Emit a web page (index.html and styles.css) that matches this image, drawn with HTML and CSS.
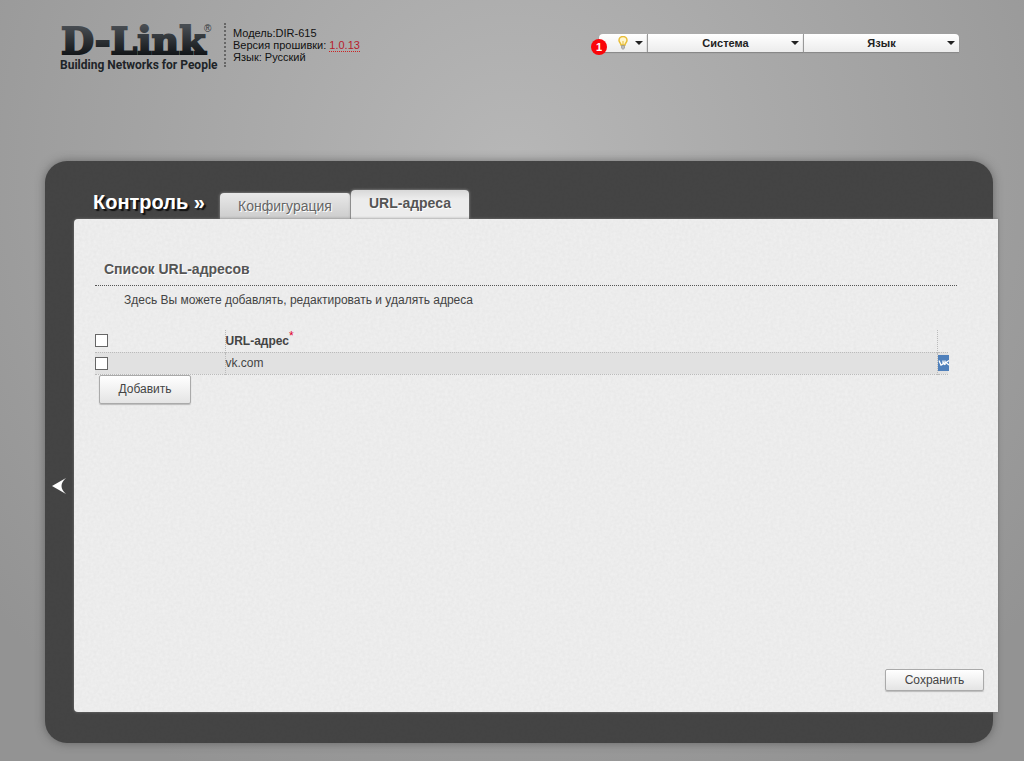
FILE: index.html
```html
<!DOCTYPE html>
<html lang="ru">
<head>
<meta charset="utf-8">
<title>D-Link DIR-615</title>
<link rel="stylesheet" href="styles.css">
</head>
<body>
<header class="header">
  <div class="brand">
    <svg class="brand-logo" viewBox="0 0 152 36">
      <defs>
        <linearGradient id="ink" gradientUnits="userSpaceOnUse" x1="0" y1="4" x2="0" y2="33">
          <stop offset="0" stop-color="#484d52"/>
          <stop offset="1" stop-color="#121518"/>
        </linearGradient>
      </defs>
      <text class="brand-name" x="1" y="32" fill="url(#ink)" stroke="url(#ink)">D-Link</text>
      <text class="brand-mark" x="144" y="10">®</text>
    </svg>
    <div class="brand-tagline">Building Networks for People</div>
  </div>
  <div class="device">
    <div>Модель:DIR-615</div>
    <div>Версия прошивки: <a class="version" href="#">1.0.13</a></div>
    <div>Язык: Русский</div>
  </div>
  <nav class="menu" aria-label="Главное меню">
    <button class="menu-item menu-item-notice" type="button" aria-label="Уведомления">
      <svg class="bulb" viewBox="0 0 12 14" aria-hidden="true">
        <path d="M4 9 C4 7 2 6.500 2 4.300 A4 3.800 0 0 1 10 4.300 C10 6.500 8 7 8 9 Z" fill="#fff6cf" stroke="#e8bd38" stroke-width="1.500"/>
        <path d="M6 5 V9" stroke="#e8bd38"/>
        <path d="M4.500 9.500 H7.500 V12 L6 13.500 L4.500 12 Z" fill="#bbb" stroke="#888" stroke-width=".6"/>
      </svg>
      <span class="caret"></span>
      <span class="badge">1</span>
    </button>
    <button class="menu-item" type="button"><span class="menu-label">Система</span><span class="caret"></span></button>
    <button class="menu-item" type="button"><span class="menu-label">Язык</span><span class="caret"></span></button>
  </nav>
</header>
<main class="panel">
  <div class="panel-head">
    <h1 class="section">Контроль »</h1>
    <nav class="tabs">
      <a class="tab" href="#">Конфигурация</a>
      <a class="tab tab-active" href="#" aria-current="page">URL-адреса</a>
    </nav>
  </div>
  <div class="panel-body">
    <button class="collapse" type="button" aria-label="Свернуть меню">
      <svg class="collapse-icon" viewBox="0 0 14 16" aria-hidden="true"><path d="M0 8 L14 0 Q5 8 14 16 Z" fill="#fff"/></svg>
    </button>
    <section class="content">
      <h2 class="title">Список URL-адресов</h2>
      <p class="hint">Здесь Вы можете добавлять, редактировать и удалять адреса</p>
      <table class="urls">
        <thead>
          <tr>
            <th class="col-check"><input class="check" type="checkbox" aria-label="Выбрать все"></th>
            <th class="col-url">URL-адрес<sup class="required">*</sup></th>
            <th class="col-icon"></th>
          </tr>
        </thead>
        <tbody>
          <tr>
            <td class="col-check"><input class="check" type="checkbox" aria-label="Выбрать vk.com"></td>
            <td class="col-url">vk.com</td>
            <td class="col-icon">
              <svg class="site-icon" viewBox="0 0 11 16" role="img" aria-label="VK"><path d="M0 0H11V16H0Z" fill="#4f80bb"/><path d="M1 5.500 L3 10 L5 9 V5.500 M5 7 L7 10 M7 5.500 V10 M11 5.500 L8 7.500 L11 10" fill="none" stroke="#fff" stroke-width="1.300"/></svg>
            </td>
          </tr>
        </tbody>
      </table>
      <button class="button button-add" type="button">Добавить</button>
      <button class="button button-save" type="button">Сохранить</button>
    </section>
  </div>
</main>
</body>
</html>
```
FILE: styles.css
```css
* {
  box-sizing: border-box;
}

:root {
  --grain: url("data:image/svg+xml,%3Csvg xmlns='http://www.w3.org/2000/svg' width='200' height='200'%3E%3Cfilter id='n'%3E%3CfeTurbulence type='fractalNoise' baseFrequency='.35' numOctaves='2' stitchTiles='stitch'/%3E%3CfeColorMatrix values='0 0 0 0 0 0 0 0 0 0 0 0 0 0 0 0 0 0 .04 0'/%3E%3C/filter%3E%3Crect width='200' height='200' filter='url(%23n)'/%3E%3C/svg%3E");
}

body {
  display: flex;
  flex-direction: column;
  min-height: 100vh;
  margin: 0;
  padding: 0 31px 18px 45px;
  background: radial-gradient(circle 680px at 50% 170px, #b7b7b7, #939393);
  color: #444;
  font: 12px/16px "Liberation Sans", Arial, sans-serif;
}

button {
  font-family: inherit;
  cursor: pointer;
}

.header {
  display: flex;
  align-items: flex-start;
  height: 161px;
  padding: 22px 34px 0 15px;
}

.brand {
  width: 152px;
  color: #202428;
}

.brand-logo {
  display: block;
  width: 152px;
  height: 36px;
  overflow: visible;
}

.brand-name {
  font: bold 38px "DejaVu Serif", serif;
  stroke-width: 2px;
}

.brand-mark {
  fill: #33373b;
  font: 10px "Liberation Sans", sans-serif;
}

.brand-tagline {
  font: bold 12px/14px "Liberation Sans Narrow", Roboto, sans-serif;
  white-space: nowrap;
}

.device {
  margin: 1px 0 0 12px;
  padding: 4px 0 4px 7px;
  border-left: 2px dotted #666;
  color: #111;
  font-size: 11px;
  line-height: 12px;
  white-space: nowrap;
}

.version {
  border-bottom: 1px dotted #c22;
  color: #b71c2c;
  text-decoration: none;
}

.menu {
  display: flex;
  margin: 12px 0 0 auto;
}

.menu-item {
  position: relative;
  display: flex;
  align-items: center;
  width: 156px;
  height: 18px;
  padding: 0 4px 0 12px;
  border: 0;
  border-left: 1px solid #999;
  background: linear-gradient(#fff, #ececec);
  box-shadow: 0 1px 1px #888;
  color: #222;
  font-size: 11px;
  font-weight: bold;
}

.menu-item:last-child {
  border-radius: 0 4px 0 0;
}

.menu-item-notice {
  justify-content: flex-end;
  gap: 6px;
  width: 48px;
  border-left: 0;
  border-radius: 4px 0 0 0;
}

.menu-label {
  flex: 1;
  text-align: center;
}

.bulb {
  width: 12px;
  height: 14px;
}

.caret {
  border: 4px solid transparent;
  border-top-color: #222;
  border-bottom: 0;
}

.badge {
  position: absolute;
  top: 5px;
  left: -8px;
  width: 16px;
  height: 16px;
  border-radius: 50%;
  background: #fa0509;
  color: #fff;
  font-size: 11px;
  line-height: 16px;
}

.panel {
  display: flex;
  flex: 1;
  flex-direction: column;
  padding-bottom: 31px;
  border-radius: 22px;
  background: var(--grain), #454545;
  box-shadow: 0 0 10px rgba(50, 50, 50, .5);
}

.panel-head {
  display: flex;
  align-items: flex-end;
  height: 58px;
  padding-left: 48px;
}

.section {
  width: 127px;
  margin: 0 0 5px;
  color: #fff;
  font-size: 20px;
  line-height: 24px;
  text-shadow: 2px 2px 1px #111;
  white-space: nowrap;
}

.tabs {
  display: flex;
  align-items: flex-end;
}

.tab {
  height: 26px;
  padding: 0 18px;
  border-right: 1px solid #888;
  border-radius: 4px 4px 0 0;
  background: linear-gradient(#e9e9e9, #ccc);
  box-shadow: 0 0 3px #999;
  color: #666;
  font-size: 14px;
  line-height: 26px;
  text-decoration: none;
  text-shadow: 1px 1px 0 #fff;
}

.tab-active {
  height: 29px;
  border-right: 0;
  background: linear-gradient(#d8d8d8, #ececec 9px);
  color: #555;
  font-weight: bold;
}

.panel-body {
  display: flex;
  flex: 1;
  margin-right: -5px;
}

.collapse {
  display: flex;
  align-items: center;
  justify-content: center;
  width: 29px;
  padding: 40px 2px 0 0;
  border: 0;
  background: none;
}

.collapse-icon {
  width: 14px;
  height: 16px;
}

.content {
  display: flex;
  flex: 1;
  flex-direction: column;
  align-items: flex-start;
  padding: 40px 14px 21px 21px;
  border-radius: 4px 0 0 4px;
  background: var(--grain), #f1f1f1;
  box-shadow: 0 0 3px #777;
}

.title {
  align-self: stretch;
  margin: 0 27px 0 0;
  padding: 0 0 6px 9px;
  border-bottom: 1px dotted #555;
  color: #555;
  font-size: 14px;
  line-height: 20px;
  text-shadow: 1px 1px 0 #fff;
}

.hint {
  margin: 6px 0 22px;
  padding-left: 29px;
}

.urls {
  width: calc(100% - 36px);
  border-collapse: collapse;
  table-layout: fixed;
  text-align: left;
}

.urls tr {
  height: 22px;
  border-bottom: 1px dotted #bbb;
}

.urls tbody tr {
  background: #e1e1e1;
}

.urls th,
.urls td {
  padding: 0;
}

.col-check {
  width: 130px;
}

.col-icon {
  width: 11px;
}

.urls .col-url,
.urls .col-icon {
  border-left: 1px dotted #bbb;
}

.check {
  display: block;
  width: 13px;
  height: 13px;
  margin: 0;
  border: 1px solid #666;
  background: #fff;
  appearance: none;
}

.check:checked {
  background: #4f80bb;
}

.required {
  color: #e0002a;
  font-size: 12px;
  font-weight: normal;
  line-height: 0;
}

.site-icon {
  display: block;
  width: 11px;
  height: 16px;
}

.button {
  border: 1px solid #aaa;
  border-radius: 2px;
  background: linear-gradient(#fff, #e4e4e4);
  box-shadow: 0 1px 1px #bbb;
  color: #444;
  font-size: 12px;
}

.button-add {
  width: 92px;
  height: 29px;
  margin-left: 4px;
}

.button-save {
  width: 99px;
  height: 22px;
  margin: auto 0 0 auto;
}
```
